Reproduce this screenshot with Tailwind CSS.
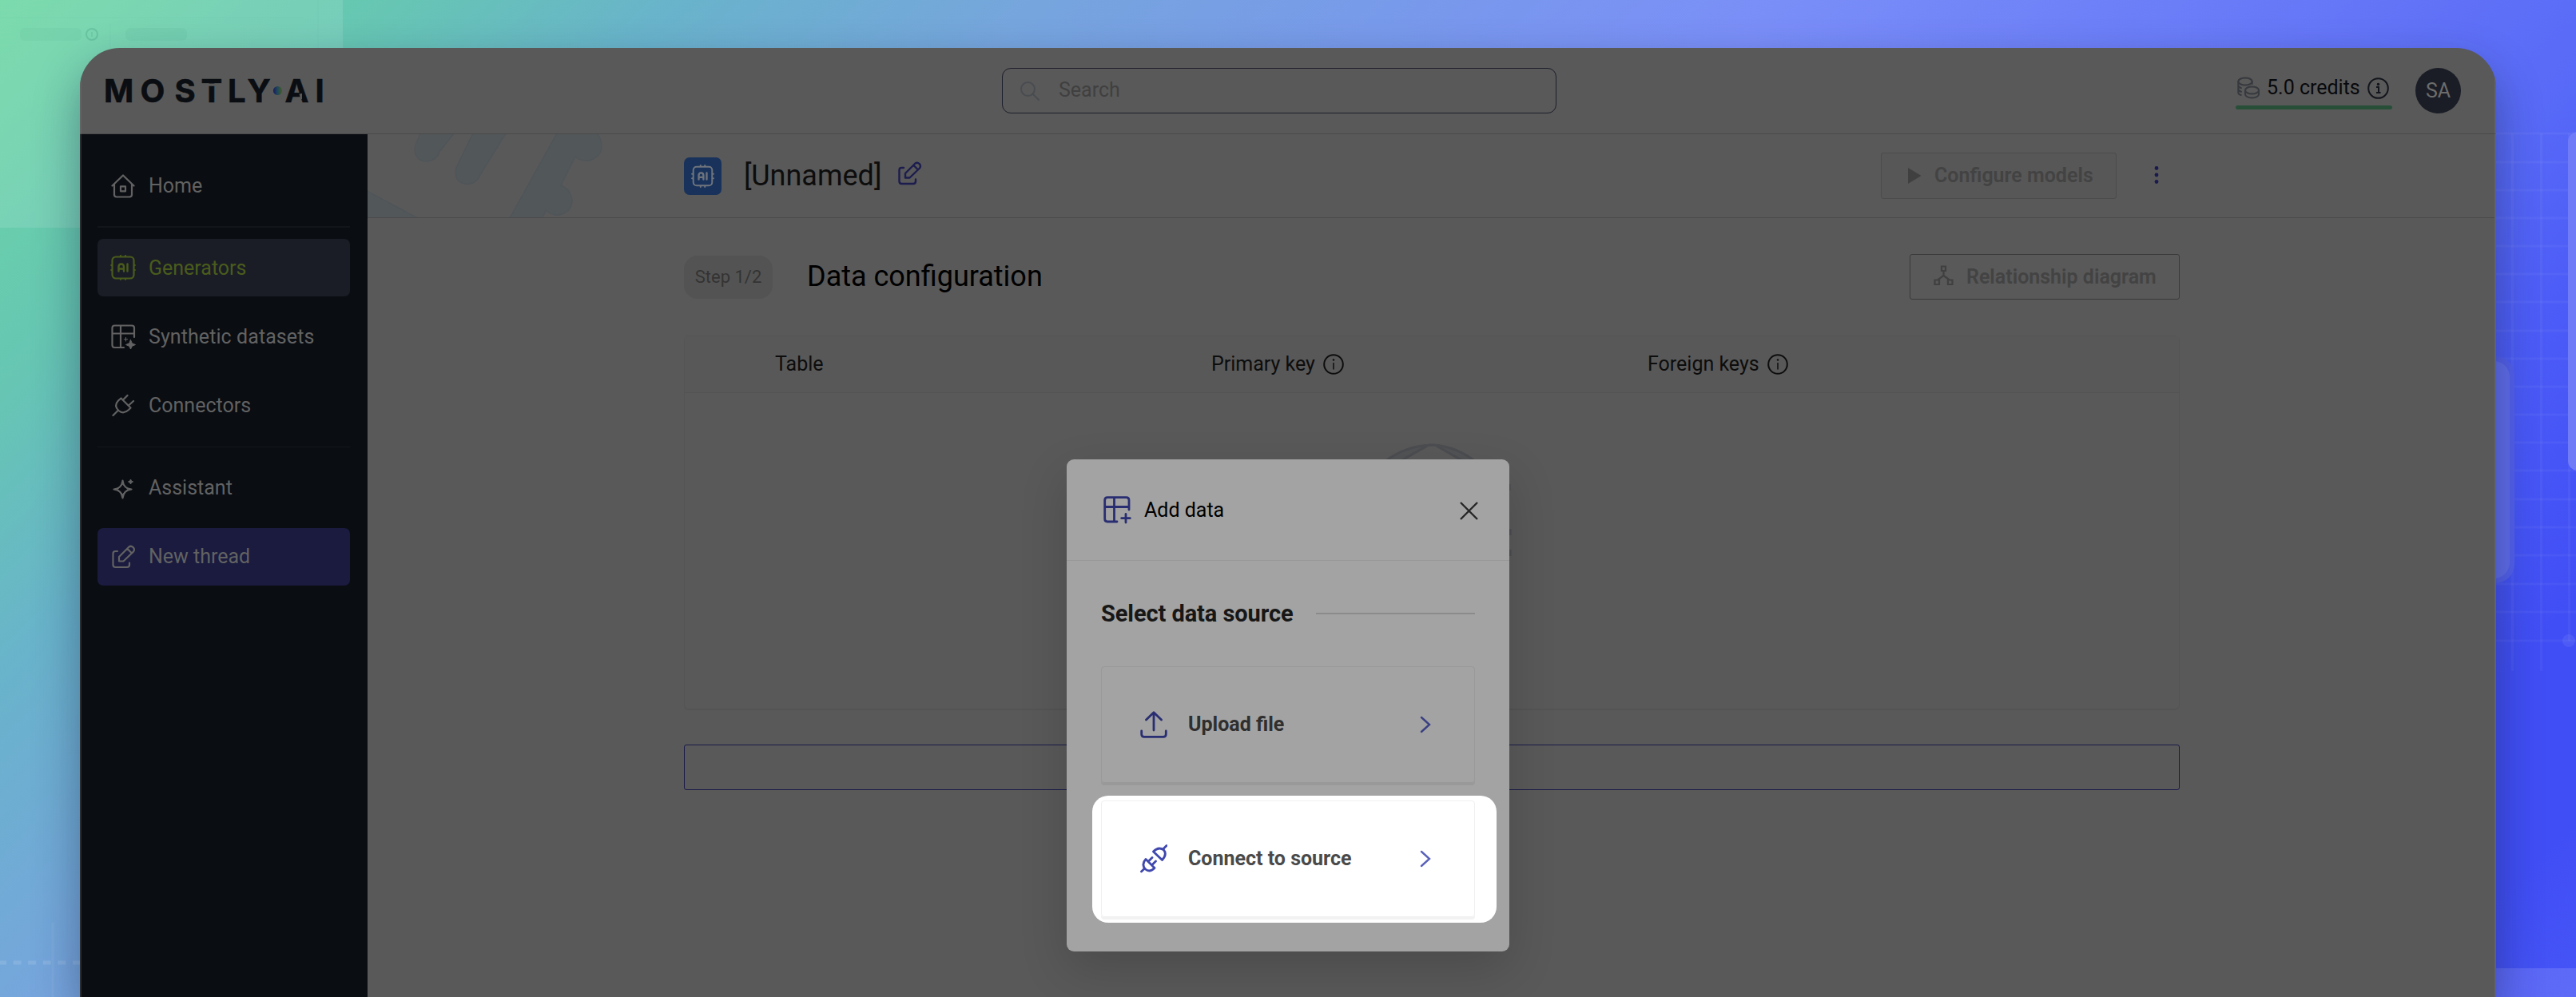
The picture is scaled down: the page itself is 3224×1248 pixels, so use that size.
<!DOCTYPE html>
<html lang="en">
<head>
<meta charset="utf-8">
<title>MOSTLY AI - Generators</title>
<script src="https://cdn.jsdelivr.net/npm/@tailwindcss/browser@4"></script>
</head>
<body class="relative h-[1248px] w-[3224px] overflow-hidden bg-[linear-gradient(135deg,#6cd7a3_0%,#66c6b3_11%,#69b3cb_19%,#76a5dd_29%,#7a8ef8_50%,#6374f7_67%,#586af7_74%,#4c5cf7_80%,#404ef5_89%,#404ef5_95%,#4655f6_100%)] font-['Roboto',sans-serif] text-[25px] leading-8">

<!-- decorative backdrop -->
<svg class="absolute inset-0" width="3224" height="1248" fill="none">
  <path d="M0 0H429V285H0Z" fill="#fff" fill-opacity=".11"/>
  <path d="M398 0V60M138 30V60M0 22H380" stroke="#3f9a90" stroke-opacity=".06"/>
  <rect x="25" y="35" width="77" height="16" rx="6" fill="#3f9a80" fill-opacity=".08"/>
  <rect x="157" y="35" width="77" height="16" rx="6" fill="#3f9a80" fill-opacity=".08"/>
  <circle cx="115" cy="43" r="7" stroke="#3f9a80" stroke-opacity=".3" stroke-width="2"/>
  <path d="M115 40V46" stroke="#3f9a80" stroke-opacity=".2" stroke-width="2"/>
  <path d="M-2 1205H100" stroke="#fff" stroke-opacity=".12" stroke-width="5" stroke-dasharray="10 8.6"/>
  <path d="M66 1155V1248" stroke="#fff" stroke-opacity=".05" stroke-width="3"/>
  <g stroke="#fff" stroke-opacity=".045" stroke-width="3">
    <path d="M3144.5 167V840M3180.5 167V840M3215.5 167V802"/>
    <path d="M3124 167H3224M3124 203H3224M3124 238H3224M3124 273H3224M3124 308H3224M3124 343H3224M3124 378H3224M3124 414H3224M3124 449H3224M3124 484H3224M3124 519H3224M3124 554H3224M3124 589H3224M3124 625H3224M3124 660H3224M3124 695H3224M3124 731H3224M3124 766H3224M3124 802H3224"/>
  </g>
  <circle cx="3215" cy="802" r="8" fill="#fff" fill-opacity=".07"/>
  <rect x="3214" y="165" width="60" height="424" rx="12" fill="#707bf8"/>
  <rect x="3060" y="446" width="87" height="284" rx="24" fill="#5361ee"/>
  <rect x="3060" y="452" width="81" height="272" rx="20" fill="#606eee"/>
  <path d="M3100 1212H3224V1248H3100Z" fill="#fff" fill-opacity=".13"/>
</svg>

<!-- application window -->
<div class="absolute left-[100px] top-[60px] flex h-[1188px] w-[3024px] flex-col overflow-hidden rounded-t-[50px] bg-[#595959] shadow-[0_26px_56px_rgba(20,30,60,0.42)]">
  <header class="flex h-[108px] shrink-0 items-center border-x-2 border-b border-x-[#646464] border-b-[#4a4a4a]">
    <svg class="ml-[20px] shrink-0" width="300" height="60" viewBox="122 84 300 60">
      <text y="128" x="130 175.500 218.500 251.500 285 309.500 356.500 394.500" font-family="Inter, sans-serif" font-weight="700" font-size="40" fill="#0a0d12" stroke="#0a0d12" stroke-width=".6">MOSTLYAI</text>
      <path d="M252 104.600H279V107.800H252ZM374.500 117.500L378 117V124H376Z" fill="#595959"/>
      <defs><linearGradient id="dot"><stop offset="0" stop-color="#1b1a5e"/><stop offset=".5" stop-color="#1d4a5c"/><stop offset="1" stop-color="#4a5c1c"/></linearGradient></defs>
      <circle cx="347.500" cy="113.500" r="5.500" fill="url(#dot)"/>
    </svg>
    <div class="ml-[832px] flex h-[57px] w-[694px] shrink-0 items-center rounded-[11px] border border-[#1c1e2b] pl-[22px] text-[#404040]">
      <svg width="24" height="24" fill="none" stroke="#494c50" stroke-width="2" stroke-linecap="round"><circle cx="9.500" cy="9.500" r="8.500"/><path d="M15.500 15.500L23 23"/></svg>
      <span class="-mt-px ml-[24px]">Search</span>
    </div>
    <div class="ml-[850px] mt-[1px] flex w-[196px] shrink-0 flex-col">
      <div class="flex h-[41px] items-center pl-[2px]">
        <svg class="-mt-[3px]" width="29" height="28" viewBox="0 0 29 28" fill="none" stroke="#36393e" stroke-width="2" stroke-linecap="round"><ellipse cx="10" cy="6" rx="8.700" ry="4.600"/><path d="M1.300 6V20C1.300 21.500 3 22.500 4.800 23M1.300 11C1.500 12.200 3 13.500 5 14.200M1.300 15.500C1.500 17 3 18.200 5 18.800M18.700 6V9"/><ellipse cx="18.500" cy="17" rx="8.500" ry="4.600"/><path d="M10 17V22C10 24.500 13.500 26.500 18.500 26.500S27 24.500 27 22V17"/></svg>
        <span class="-mt-[3px] ml-[8px] w-[118px] whitespace-nowrap text-[#08090c]">5.0 credits</span>
        <svg class="-mt-[3px] ml-[8px]" width="27" height="27" viewBox="0 0 27 27" fill="none" stroke="#12151c" stroke-width="2"><circle cx="13.500" cy="13.500" r="12.300"/><path d="M11 12H14V19M11 19H16.500"/><circle cx="13.500" cy="8.500" r=".8" fill="#12151c"/></svg>
      </div>
      <div class="h-[5px] rounded-sm bg-[#274f38]"></div>
    </div>
    <div class="ml-[29px] flex size-[57px] items-center justify-center rounded-full bg-[#1a1d26] text-[#6c6c6c]">SA</div>
  </header>

  <div class="flex min-h-0 grow">
    <nav class="flex w-[360px] shrink-0 flex-col border-l-2 border-[#2b2d31] bg-[#0a0d12] px-5 pt-[29px] text-[#626262]">
      <a class="flex h-[72px] w-[316px] items-center">
        <svg class="ml-[17px]" width="30" height="30" viewBox="0 0 30 30" fill="none" stroke="currentColor" stroke-width="2.200" stroke-linecap="round" stroke-linejoin="round"><path d="M1.500 14.500L15 1.500L28.500 14.500M4 13V25.500Q4 28.500 7 28.500H23Q26 28.500 26 25.500V13"/><path d="M12 15.300H18V21.300H12Z"/></svg>
        <span class="-mt-px ml-[17px]">Home</span>
      </a>
      <div class="mt-[14px] h-[2px] w-[316px] bg-[#12151a]"></div>
      <a class="mt-[14px] flex h-[72px] w-[316px] items-center rounded-[7px] bg-[#1a1d26] text-[#4a5c1c]">
        <svg class="ml-4" width="32" height="32" viewBox="0 0 32 32" fill="none" stroke="currentColor" stroke-width="2.200" stroke-linecap="round"><rect x="2.500" y="2.500" width="27" height="27" rx="4.500"/><path d="M13 1.200V2M19 1.200V2M13 30V30.800M19 30V30.800M1.200 13H2M1.200 19H2M30 13H30.800M30 19H30.800"/><path d="M10.500 20.500V15Q10.500 11.500 13.700 11.500T17 15V20.500M10.500 17.500H17M21.500 11.500V20.500" stroke-width="2.400"/></svg>
        <span class="ml-[16px] mt-px">Generators</span>
      </a>
      <a class="mt-[14px] flex h-[72px] w-[316px] items-center">
        <svg class="ml-[17px]" width="31" height="31" viewBox="0 0 31 31" fill="none" stroke="currentColor" stroke-width="2.200" stroke-linecap="round"><path d="M29 16V4.500Q29 1.500 26 1.500H4.500Q1.500 1.500 1.500 4.500V26Q1.500 29 4.500 29H16M1.500 11.500H29M12 1.500V29"/><path d="M24.500 19.500L26.300 23.700L30.500 25.500L26.300 27.300L24.500 31L22.700 27.300L18.500 25.500L22.700 23.700ZM18.500 16.500V21M16.300 18.700H20.700" fill="currentColor" stroke-width="1"/></svg>
        <span class="ml-[16px] mt-px whitespace-nowrap tracking-[0.08px]">Synthetic datasets</span>
      </a>
      <a class="mt-[14px] flex h-[72px] w-[316px] items-center">
        <svg class="ml-[18px]" width="29" height="29" viewBox="0 0 29 29" fill="none" stroke="currentColor" stroke-width="2.200" stroke-linecap="round" stroke-linejoin="round"><path d="M1.500 27L7 21.500M11.500 5.500L23.500 17.500L21 20Q14.500 26 8.500 21Q2 15 8 8.500ZM14.500 7L19.500 2M21.500 14L27 9"/></svg>
        <span class="ml-[17px] mt-px">Connectors</span>
      </a>
      <div class="mt-[16px] h-px w-[316px] bg-[#13161b]"></div>
      <a class="mt-[15px] flex h-[72px] w-[316px] items-center">
        <svg class="ml-[18px]" width="29" height="29" viewBox="0 0 29 29" fill="none" stroke="currentColor" stroke-width="2.200" stroke-linejoin="round"><path d="M13.500 4.500Q14.500 14.500 24.500 15.500Q14.500 16.500 13.500 26.500Q12.500 16.500 2.500 15.500Q12.500 14.500 13.500 4.500Z" /><path d="M13.500 9L16.500 12.500L20 15.500L16.500 18.500L13.500 22L10.500 18.500L7 15.500L10.500 12.500Z" stroke-width="1"/><path d="M23.500 3L24.500 5L26.500 6L24.500 7L23.500 9L22.500 7L20.500 6L22.500 5Z" fill="currentColor" stroke-width="1"/></svg>
        <span class="ml-[17px]">Assistant</span>
      </a>
      <a class="mt-[14px] flex h-[72px] w-[316px] items-center rounded-[7px] bg-[#1a1b3f]">
        <svg class="ml-[18px]" width="30" height="30" viewBox="0 0 30 30" fill="none" stroke="currentColor" stroke-width="2.200" stroke-linecap="round" stroke-linejoin="round"><path d="M7 8H4.500Q1.500 8 1.500 11V25Q1.500 28 4.500 28H19Q22 28 22 25V22.500"/><path d="M9 20.500V15L21.500 2.500Q24 .7 26.800 3.200Q29 6 27 8.500L14.500 20.500ZM19.500 5L24.500 10"/></svg>
        <span class="-mt-px ml-[16px]">New thread</span>
      </a>
    </nav>

    <main class="flex grow flex-col border-r-2 border-[#646464]">
      <div class="relative flex h-[105px] items-center border-b border-[#4a4a4a] pl-[396px]">
        <svg class="absolute left-0 top-0" width="310" height="104" viewBox="460 168 310 104" fill="#52575a" stroke="#4f5559" stroke-width="1.500">
          <path d="M459 239L523 273H459ZM526 167L519.500 184Q518 202 535 202Q547 200 550 190L568 167M592 167L571 210Q567 230 586 230.500Q598 229 602 217L633 167M697 167L638 273H679L683 263Q690 270 700 269Q716 265 716 250Q714 236 702 232L720 196Q727 202 738 201Q752 196 753 184Q753 173 747 167"/>
        </svg>
        <div class="flex size-[47px] items-center justify-center rounded-[7px] bg-[#18325c] text-[#6f747c]">
          <svg width="29" height="29" viewBox="0 0 32 32" fill="none" stroke="currentColor" stroke-width="2.200" stroke-linecap="round"><rect x="3" y="3" width="26" height="26" rx="4.500"/><path d="M13 1.200V2M19 1.200V2M13 30V30.800M19 30V30.800M1.200 13H2M1.200 19H2M30 13H30.800M30 19H30.800"/><path d="M10.500 20.500V15Q10.500 11.500 13.700 11.500T17 15V20.500M10.500 17.500H17M21.500 11.500V20.500" stroke-width="2.600"/></svg>
        </div>
        <h1 class="ml-[28px] text-[36px] leading-[42px] text-[#0d0d0d]">[Unnamed]</h1>
        <svg class="mb-[6px] ml-[21px]" width="30" height="30" viewBox="0 0 30 30" fill="none" stroke="#1c1c4f" stroke-width="2.400" stroke-linecap="round" stroke-linejoin="round"><path d="M7 8H4.500Q1.500 8 1.500 11V25Q1.500 28 4.500 28H19Q22 28 22 25V22.500"/><path d="M9 20.500V15L21.500 2.500Q24 .7 26.800 3.200Q29 6 27 8.500L14.500 20.500ZM19.500 5L24.500 10"/></svg>
        <div class="absolute left-[1894px] flex h-[58px] w-[295px] items-center rounded-[3px] border border-[#4c4c4c] bg-[#575757] pl-[33px] font-semibold text-[#434343]">
          <svg width="17" height="20" fill="#404040"><path d="M0 0L16.500 10L0 20Z"/></svg>
          <span class="-mt-px ml-[16px] whitespace-nowrap">Configure models</span>
        </div>
        <svg class="absolute left-[2236px] top-[40px]" width="6" height="22" fill="#1a1a4f"><circle cx="3" cy="2.500" r="2.400"/><circle cx="3" cy="11" r="2.400"/><circle cx="3" cy="19.500" r="2.400"/></svg>
      </div>

      <section class="ml-[396px] mt-[45px] flex w-[1872px] flex-col">
        <div class="flex h-[58px] items-center">
          <span class="flex h-[54px] w-[111px] items-center justify-center rounded-[17px] bg-[#535353] text-[22px] text-[#333]">Step 1/2</span>
          <h2 class="-mt-[2px] ml-[43px] text-[36px] leading-[42px] text-black">Data configuration</h2>
          <div class="mb-px ml-auto flex h-[57px] w-[338px] items-center rounded-[3px] border border-[#3a3a3a] pl-[29px] font-semibold text-[#434343]">
            <svg class="-mt-[3px]" width="25" height="26" fill="none" stroke="#404040" stroke-width="2.200"><path d="M10 1.500H15V7H10ZM1.500 18.500H7V24H1.500ZM18 18.500H23.500V24H18ZM12.500 7V13L5 18.500M12.500 13L20 18.500"/></svg>
            <span class="ml-[16px] whitespace-nowrap">Relationship diagram</span>
          </div>
        </div>

        <div class="relative mt-[44px] flex h-[469px] flex-col rounded-md border border-b-2 border-[#545454]">
          <div class="grid h-[71px] grid-cols-[546px_546px_1fr] items-center border-b border-[#535353] bg-[#585858] pl-[113px] text-[#0d0d0d]">
            <span>Table</span>
            <span class="flex items-center gap-[10px]">Primary key
              <svg width="26" height="26" fill="none" stroke="#0d0d0d" stroke-width="2"><circle cx="13" cy="13" r="11.800"/><path d="M13 11V19.500" stroke-width="1.500"/><circle cx="13" cy="7.500" r="1.200" fill="#0d0d0d" stroke="none"/></svg></span>
            <span class="flex items-center gap-[10px]">Foreign keys
              <svg width="26" height="26" fill="none" stroke="#0d0d0d" stroke-width="2"><circle cx="13" cy="13" r="11.800"/><path d="M13 11V19.500" stroke-width="1.500"/><circle cx="13" cy="7.500" r="1.200" fill="#0d0d0d" stroke="none"/></svg></span>
          </div>
          <svg class="mx-auto mt-[62px]" width="204" height="204" fill="none" stroke="#4c4d51" stroke-width="3">
            <path d="M38 28Q66 4 102 3Q134 4 162 28L148 27L106 3H98L56 27Z" fill="#525355"/>
            <path d="M199 52V60M200 108V116M200 134V142"/>
          </svg>
        </div>
        <div class="mt-[43px] h-[57px] rounded-[3px] border border-[#1a1a4a]"></div>
      </section>
    </main>
  </div>
</div>

<!-- dialog -->
<div class="absolute left-[1335px] top-[575px] flex h-[616px] w-[554px] flex-col rounded-[9px] bg-[#a3a3a3] shadow-[0_22px_60px_rgba(0,0,0,0.16)]">
  <div class="flex h-[127px] items-center border-b border-[#989898] pl-[46px] pr-[39px]">
    <svg width="35" height="35" viewBox="0 0 35 35" fill="none" stroke="#292e72" stroke-width="2.800" stroke-linecap="round"><path d="M32 17V5Q32 1.700 28.500 1.700H5Q1.700 1.700 1.700 5V28.500Q1.700 32 5 32H17M1.700 13.500H32M13.500 1.700V32M28 22.500V33M22.700 27.700H33.300"/></svg>
    <span class="ml-4 mt-px text-black">Add data</span>
    <svg class="ml-auto mt-[3px]" width="23" height="23" fill="none" stroke="#262626" stroke-width="2.400"><path d="M1 1L22 22M22 1L1 22"/></svg>
  </div>
  <div class="flex flex-col px-[43px] pt-[49px]">
    <div class="flex h-[34px] items-center">
      <h3 class="w-[269px] whitespace-nowrap text-[29px] font-bold leading-[34px] tracking-[-0.08px] text-[#171717]">Select data source</h3>
      <div class="h-[2px] grow bg-[#8b8b8b]"></div>
    </div>
    <div class="mt-[49px] flex h-[146px] items-center rounded-[4px] border border-[#999] pb-px pl-[48px] pr-[54px] shadow-[0_3px_0_#999]">
      <svg width="34" height="34" viewBox="0 0 34 34" fill="none" stroke="#292e72" stroke-width="2.800" stroke-linecap="round" stroke-linejoin="round"><path d="M17 24V2M7.500 11L17 1.700L26.500 11M1.700 25V29Q1.700 32.300 5 32.300H29Q32.300 32.300 32.300 29V25"/></svg>
      <span class="ml-[26px] font-bold text-[#2f2f2f]">Upload file</span>
      <svg class="ml-auto" width="14" height="24" fill="none" stroke="#3a3f82" stroke-width="2.400" stroke-linecap="round"><path d="M2 3L12 12L2 21"/></svg>
    </div>
    <div class="-ml-[11px] mt-[16px] flex h-[159px] w-[506px] flex-col rounded-[20px] bg-white pl-[11px] pt-[6px]">
      <div class="flex h-[146px] w-[468px] items-center rounded-[4px] border border-[#f0f0f0] pb-px pl-[48px] pr-[54px] shadow-[0_3px_0_#f2f2f2]">
        <svg width="34" height="36" viewBox="0 0 34 36" fill="none" stroke="#4048ae" stroke-width="2.800" stroke-linecap="round" stroke-linejoin="round"><path d="M1.500 34L5.500 30M7 18.500L18 29.500Q12 35.500 6.500 31Q1 25 7 18.500ZM11 20.500L15 16.500M15.500 25L19.500 21M33 1.500L28.500 6M16.500 9L27.500 19.500Q34 12.500 29.500 7Q23 2 16.500 9Z"/></svg>
        <span class="ml-[26px] whitespace-nowrap font-bold text-[#4a4a4a]">Connect to source</span>
        <svg class="ml-auto" width="14" height="24" fill="none" stroke="#5a61ba" stroke-width="2.400" stroke-linecap="round"><path d="M2 3L12 12L2 21"/></svg>
      </div>
    </div>
  </div>
</div>
</body>
</html>
